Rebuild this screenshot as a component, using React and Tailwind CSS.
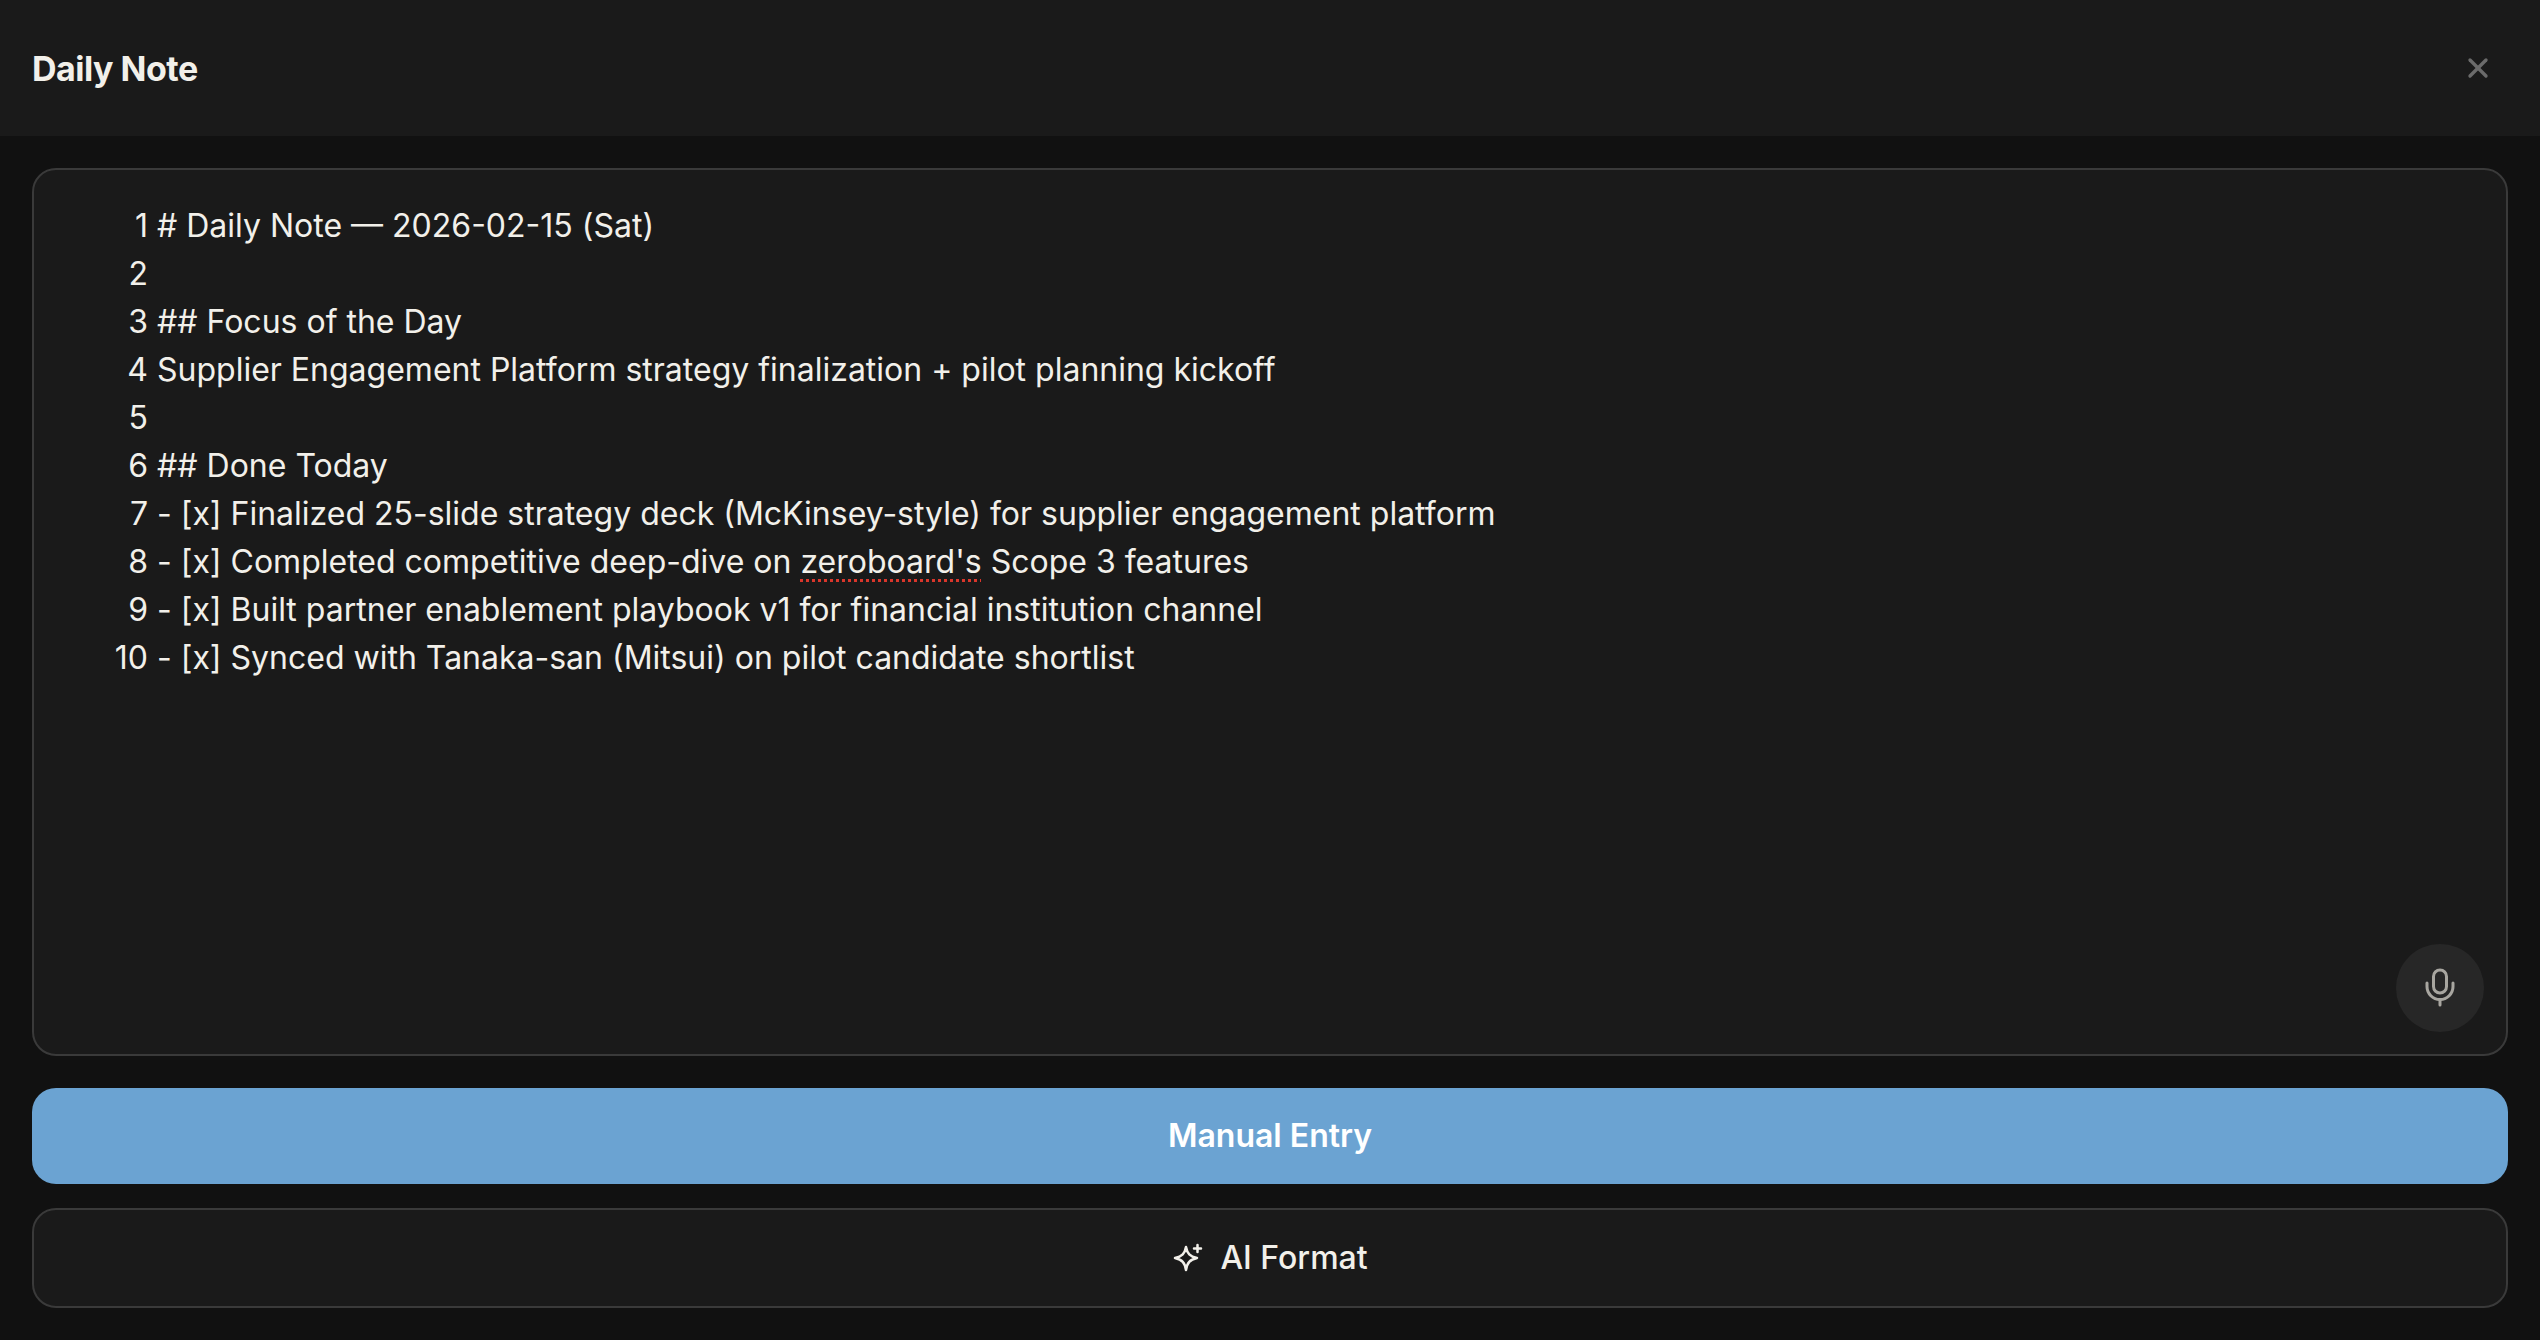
import React from 'react';
import { X } from 'lucide-react';

const font = { fontFamily: 'Inter, "Liberation Sans", sans-serif' };

const lines = [
  '# Daily Note — 2026-02-15 (Sat)',
  '',
  '## Focus of the Day',
  'Supplier Engagement Platform strategy finalization + pilot planning kickoff',
  '',
  '## Done Today',
  '- [x] Finalized 25-slide strategy deck (McKinsey-style) for supplier engagement platform',
  null,
  '- [x] Built partner enablement playbook v1 for financial institution channel',
  '- [x] Synced with Tanaka-san (Mitsui) on pilot candidate shortlist',
];

const NoteLine = ({ n, text }) => (
  <div className="h-12 leading-[48px] whitespace-pre">
    <span className="inline-block min-w-[48px] text-right">{n}</span>
    {' '}
    {text === null ? (
      <>
        - [x] Completed competitive deep-dive on{' '}
        <span className="underline decoration-dotted decoration-[#d9362b] decoration-[3px] underline-offset-[6px]">zeroboard's</span>
        {' '}Scope 3 features
      </>
    ) : text}
  </div>
);

const App = () => {
  return (
    <div className="w-[2540px] h-[1340px] flex flex-col bg-[#111111] text-[#f2f0ea] overflow-hidden" style={font}>
      {/* Header */}
      <div className="h-[136px] shrink-0 bg-[#1a1a1a] flex items-center justify-between pl-8 pr-[46px]">
        <h1 className="text-[34px] font-bold tracking-[-0.5px]">Daily Note</h1>
        <X size={32} strokeWidth={2.5} className="text-[#6b6b6b]" />
      </div>

      <div className="flex-1 flex flex-col px-8 pt-8 pb-8">
        {/* Editor */}
        <div className="relative h-[888px] shrink-0 rounded-3xl border-2 border-[#3a3a3a] bg-[#1a1a1a] pl-[66px] pt-[32px] text-[32px]">
          {lines.map((text, i) => (
            <NoteLine key={i} n={i + 1} text={text} />
          ))}
          <button className="absolute right-[22px] bottom-[22px] w-[88px] h-[88px] rounded-full bg-[#272727] flex items-center justify-center">
            <svg width="32" height="40" viewBox="0 0 32 40" fill="none" stroke="#a8a6a0" strokeWidth="3" strokeLinecap="round">
              <rect x="9.5" y="2" width="13" height="23" rx="6.5" />
              <path d="M3 15v3.500a13 13 0 0 0 26 0V15" />
              <path d="M16 31.500V37" />
            </svg>
          </button>
        </div>

        {/* Actions */}
        <button className="mt-8 h-24 shrink-0 rounded-3xl bg-[#6ba3d2] text-white text-[32px] font-semibold">
          Manual Entry
        </button>
        <button className="mt-6 h-[100px] shrink-0 rounded-3xl border-2 border-[#3a3a3a] bg-[#1a1a1a] text-[32px] font-medium flex items-center justify-center gap-[16px]">
          <svg width="32" height="32" viewBox="0 0 32 32" fill="none" stroke="currentColor" strokeWidth="2.500" strokeLinecap="round" strokeLinejoin="round">
            <path d="M14 5c1.200 6.500 3.800 9.300 11 11-7.200 1.700-9.800 4.500-11 12-1.200-7.500-3.800-10.300-11-12 7.200-1.700 9.800-4.500 11-11z" />
            <path d="M25.500 3v7M22 6.500h7" />
          </svg>
          AI Format
        </button>
      </div>
    </div>
  );
};

export default App;
